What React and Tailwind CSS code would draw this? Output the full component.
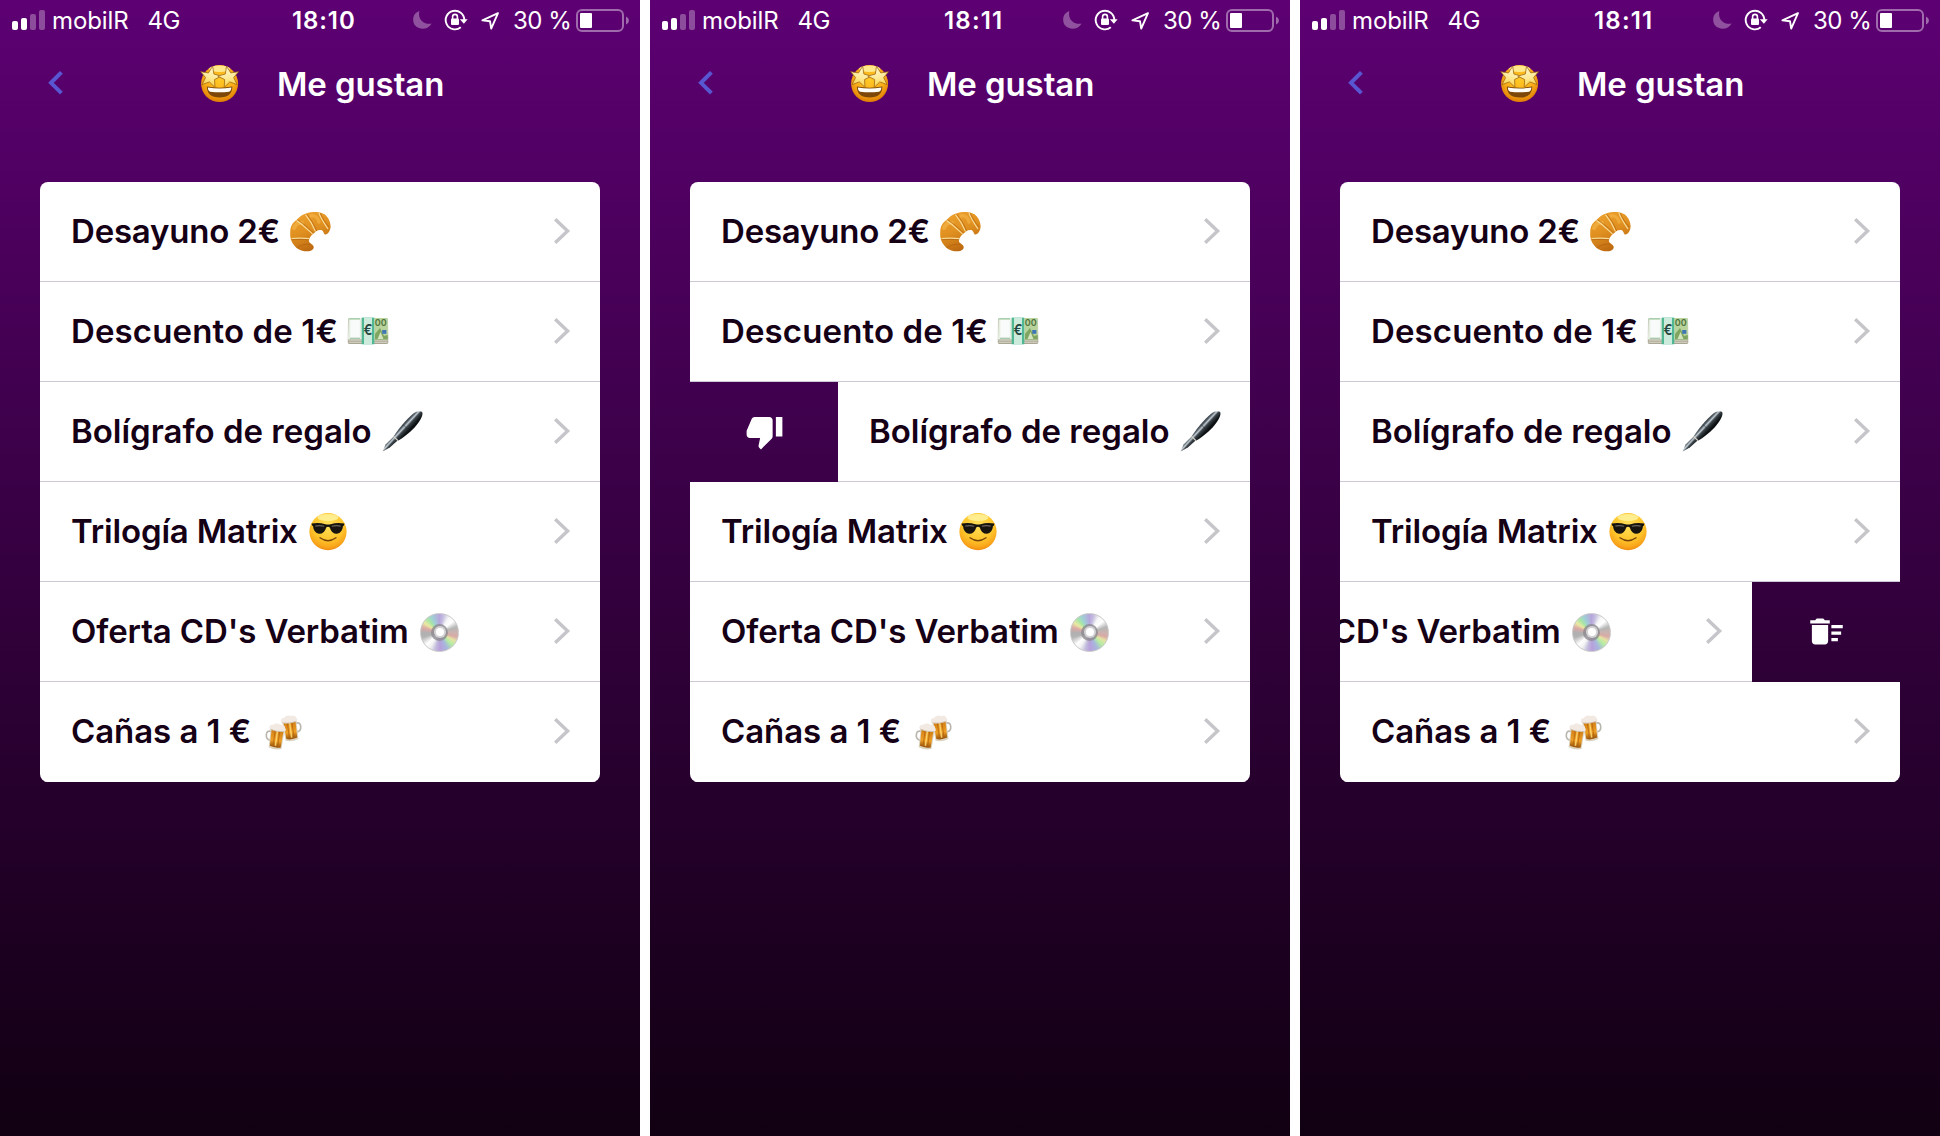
import React from "react";

const STAR =
  "M0 -11 L2.8 -3.6 L10.6 -3.2 L4.6 1.6 L6.6 9.2 L0 5 L-6.6 9.2 L-4.6 1.6 L-10.6 -3.2 L-2.8 -3.6 Z";

function StarStruck() {
  return (
    <svg className="size-11 shrink-0" viewBox="0 0 44 44">
      <defs>
        <radialGradient id="face-gold" cx="0.5" cy="0.4" r="0.6">
          <stop offset="0" stopColor="#ffc926" />
          <stop offset="0.65" stopColor="#f9ac18" />
          <stop offset="1" stopColor="#de7c04" />
        </radialGradient>
        <linearGradient id="star-gold" x1="0" y1="0" x2="0" y2="1">
          <stop offset="0" stopColor="#fff6cf" />
          <stop offset="0.6" stopColor="#fde994" />
          <stop offset="1" stopColor="#f9cf45" />
        </linearGradient>
      </defs>
      <circle cx="21.6" cy="21.6" r="18.5" fill="url(#face-gold)" />
      <ellipse cx="21.6" cy="6.8" rx="10.5" ry="3.2" fill="#fff0a0" opacity="0.85" />
      <path d="M8.8 24.6 Q21.6 26.8 34.4 24.6 Q34.2 35.6 21.6 35.6 Q9 35.6 8.8 24.6 Z" fill="#7c4708" />
      <path d="M9.8 25.4 Q21.6 27.6 33.4 25.4 Q33 29.2 31 29.7 Q21.6 31 12.2 29.7 Q10.2 29.2 9.8 25.4 Z" fill="#fffdf5" />
      <g fill="url(#star-gold)" stroke="#9c6510" strokeWidth="0.7" strokeLinejoin="round">
        <path d={STAR} transform="translate(12.4 15) rotate(12)" />
        <path d={STAR} transform="translate(30.8 15) rotate(-12)" />
      </g>
    </svg>
  );
}

function Croissant() {
  return (
    <svg className="size-11 shrink-0" viewBox="0 0 44 44">
      <defs>
        <linearGradient id="crust" x1="0.2" y1="0" x2="0.6" y2="1">
          <stop offset="0" stopColor="#eea22f" />
          <stop offset="0.5" stopColor="#df8f1f" />
          <stop offset="1" stopColor="#b8640f" />
        </linearGradient>
      </defs>
      <path
        d="M42.6 16 C42.8 20 40 24.5 37.4 24.6 C35.5 24.6 36 20.5 33 20 C29 19.6 27.6 22 25.5 23.5 C22.5 26 20 29.5 21.2 32 C22.3 34 26 34.6 25.7 37.4 C25.3 40.6 20.5 41.6 16.5 41.2 C12 40.6 8.5 38.8 6.5 35.8 C3 32 1.8 27.5 2.2 22 C2.4 16 4.5 12.5 9 9.5 C13 5 18 2.6 25.3 2 C31 1.8 36.5 3.2 38.6 6.2 C41.3 9.2 42.4 12.5 42.6 16 Z"
        fill="url(#crust)"
      />
      <path d="M6 18 C8 14 11 12 14 13" stroke="#f5b84c" strokeWidth="4" fill="none" strokeLinecap="round" opacity="0.6" />
      <path d="M23 6 C27 5 30 8 31 12" stroke="#f5b64a" strokeWidth="3.4" fill="none" strokeLinecap="round" opacity="0.6" />
      <g stroke="#f7dc98" strokeWidth="1.1" fill="none">
        <path d="M8.5 10.5 C14 14 20 20 24.5 24" />
        <path d="M17.5 4.6 C21 9 25 15 27.5 21.5" />
        <path d="M31 3 C32.5 8 36 13 40 19" />
        <path d="M3.5 28.5 C9 28 15 28 21.6 28.6" />
      </g>
      <g stroke="#a9590c" strokeWidth="0.9" fill="none" opacity="0.6">
        <path d="M9.5 9.8 C15 13 21 18.5 25.5 23" />
        <path d="M18.7 4.2 C22 8 26 14 28.6 21" />
        <path d="M32.4 3.3 C34 8 37 12 41 17" />
        <path d="M3.8 29.8 C9 29.4 15 29.2 21.2 29.8" />
        <path d="M9 38 C12 35 17 34 22.4 34" />
      </g>
    </svg>
  );
}

function EuroNotes() {
  return (
    <svg className="size-11 shrink-0" viewBox="0 0 44 44">
      <path d="M2 9 H42 L42.3 32.5 Q42 34 40.5 34 H3.5 Q2 34 1.8 32.5 Z" fill="#a9a694" />
      <path d="M2.6 30.8 H41.5 M2.6 32.4 H41.5" stroke="#e5e3d4" strokeWidth="0.7" />
      <path d="M2.5 8 H41.5 L42 29.5 H2 Z" fill="#e6eee2" />
      <rect x="4.3" y="10" width="9.5" height="17" fill="#f8fbfa" />
      <path d="M2.5 8.8 H14" stroke="#9cc79f" strokeWidth="1.2" />
      <path d="M4 28.4 H14" stroke="#a6c8ad" strokeWidth="1.1" />
      <path d="M28.5 8 H41.5 L42 29.5 H28.5 Z" fill="#b9d39c" />
      <path d="M29 24 L34 18 L38 26 L41.8 25 V29.5 H29 Z" fill="#7fa561" />
      <path d="M31.5 29 L34.6 22 L37.4 29 Z" fill="#d3e4bf" />
      <rect x="36.2" y="20" width="4.2" height="3.8" fill="#3f76b5" />
      <text x="28.8" y="16.2" fontSize="9" fontFamily="Inter, sans-serif" fontWeight="600" fill="#50733d">00</text>
      <path d="M15.7 7.6 H28.3 V34.3 H15.7 Z" fill="#4fb893" />
      <path d="M18 7.6 H26 V34.3 H18 Z" fill="#cdebdc" />
      <text x="17.4" y="24.8" fontSize="15" fontFamily="Inter, sans-serif" fontWeight="600" fill="#25463f" textLength="9" lengthAdjust="spacingAndGlyphs">€</text>
    </svg>
  );
}

function Pen() {
  return (
    <svg className="size-11 shrink-0" viewBox="0 0 44 44">
      <defs>
        <linearGradient id="barrel" gradientUnits="userSpaceOnUse" x1="18.5" y1="16.5" x2="25.5" y2="23">
          <stop offset="0" stopColor="#22282c" />
          <stop offset="0.25" stopColor="#56616a" />
          <stop offset="0.42" stopColor="#c3ccd2" />
          <stop offset="0.6" stopColor="#3c454b" />
          <stop offset="1" stopColor="#0d1113" />
        </linearGradient>
      </defs>
      <path d="M1.6 41.6 L4.6 34.6 L13.2 26 L17.2 30 L8.8 37.4 Z" fill="url(#barrel)" />
      <path d="M12.3 27 C16.5 20 25 9.8 32.4 3.6 C35.8 1 40.2 0.4 41.4 2.6 C42.2 6.4 38 12.6 33.6 17.4 C27.8 23.4 22 27.8 16.6 31 Z" fill="url(#barrel)" />
      <path d="M12.4 26.2 L17.2 30.9" stroke="#d8d2c6" strokeWidth="1.2" />
      <path d="M22 14.5 L28.5 21" stroke="#20262a" strokeWidth="0.7" opacity="0.7" />
      <path d="M2.3 41 L7 35.8" stroke="#9fa8ad" strokeWidth="0.8" />
    </svg>
  );
}

function Sunglasses() {
  return (
    <svg className="size-11 shrink-0" viewBox="0 0 44 44">
      <defs>
        <radialGradient id="face-sun" cx="0.5" cy="0.32" r="0.7">
          <stop offset="0" stopColor="#ffe15a" />
          <stop offset="0.6" stopColor="#fec42a" />
          <stop offset="0.85" stopColor="#f9a51b" />
          <stop offset="1" stopColor="#ee850f" />
        </radialGradient>
      </defs>
      <circle cx="21" cy="21.6" r="18.6" fill="url(#face-sun)" />
      <ellipse cx="21" cy="7.5" rx="10.5" ry="3.6" fill="#fff6a8" opacity="0.75" />
      <path d="M4.6 13.6 Q12 12.4 18.4 14.2 Q21 14.8 23.6 14.2 Q30 12.4 37.4 13.6 L37 15.4 L36 16 Q35.4 22.8 30 23.8 Q24.6 24 22.8 17.4 Q21 16.2 19.2 17.4 Q17.4 24 12 23.8 Q6.6 22.8 6 16 L5 15.4 Z" fill="#17130f" />
      <path d="M8.3 16.1 Q12.5 15 17.2 16.3 M24.8 16.3 Q29.5 15 33.7 16.1" stroke="#6a655f" strokeWidth="1.1" fill="none" />
      <path d="M13 27.8 Q21 33.6 29 27.8" stroke="#75420a" strokeWidth="1.4" fill="none" strokeLinecap="round" />
    </svg>
  );
}

function Disc() {
  return (
    <span className="flex size-11 shrink-0 items-center justify-center">
      <span className="flex size-[39px] items-center justify-center rounded-full border border-[#c9c9c9] bg-[conic-gradient(#b7a6dc_0deg,#c6bfe0_14deg,#f7f7f7_32deg,#ffffff_50deg,#b5b5b5_72deg,#cdb2ae_92deg,#d9a9a6_104deg,#e4e3a4_118deg,#b5eda2_134deg,#a7b8dc_154deg,#b79fdc_178deg,#c2bcdc_194deg,#f3f3f3_212deg,#ffffff_228deg,#b3b3b3_254deg,#b0b0b0_268deg,#dba9a6_286deg,#e9eaa2_302deg,#a8e6a4_318deg,#9fd0d6_334deg,#b7a6dc_360deg)]">
        <span className="flex size-[17px] items-center justify-center rounded-full bg-[#8d8a90]/80">
          <span className="flex size-[12px] items-center justify-center rounded-full bg-[#d3d3d6]">
            <span className="size-[8px] rounded-full bg-white" />
          </span>
        </span>
      </span>
    </span>
  );
}

function Mug({ transform, flip }) {
  return (
    <g transform={transform}>
      <path
        d={flip ? "M13.5 8.5 Q18 7.4 18 12 Q18 17 13 17.4" : "M1.5 8.5 Q-3 7.4 -3 12 Q-3 17 2 17.4"}
        fill="none"
        stroke="#b9b6ae"
        strokeWidth="1.6"
      />
      <path d="M0.5 4 H14.5 L14 24.4 Q7.5 26.6 1 24.4 Z" fill="#dcd3bd" />
      <path d="M1.5 6 H13.5 L13 22.8 Q7.5 24.6 2 22.8 Z" fill="url(#beer)" />
      <path d="M5.2 7 V22 M9.8 7 V22" stroke="#a85a08" strokeWidth="1" opacity="0.6" />
      <path d="M7.5 7 V22" stroke="#ffdf7a" strokeWidth="1.5" opacity="0.8" />
      <path d="M-0.6 6 C-2 2.5 1 1.2 2.6 1.6 C4 -0.8 8 -1 9.6 0.6 C12 -0.4 14.8 1.4 14.6 3 C16.4 4.4 15.6 6.8 14 6.8 Q7 8.6 -0.6 6 Z" fill="#f1e9e2" />
      <path d="M0 6.2 Q7 8.4 14.4 6.6" stroke="#cdbfae" strokeWidth="0.8" fill="none" />
    </g>
  );
}

function Beers() {
  return (
    <svg className="size-11 shrink-0" viewBox="0 0 44 44">
      <defs>
        <linearGradient id="beer" x1="0" y1="0" x2="0" y2="1">
          <stop offset="0" stopColor="#cf7d16" />
          <stop offset="0.6" stopColor="#ef9f24" />
          <stop offset="1" stopColor="#95500b" />
        </linearGradient>
      </defs>
      <Mug transform="translate(18.2 6.8) rotate(-8)" flip />
      <Mug transform="translate(8 13) rotate(8)" />
    </svg>
  );
}

function Chevron() {
  return (
    <svg className="h-[30px] w-5 shrink-0" viewBox="0 0 20 30" fill="none" stroke="#c5c5ca" strokeWidth="3.4">
      <path d="M3.2 3.2 L15.6 15 L3.2 26.8" />
    </svg>
  );
}

function Signal() {
  return (
    <svg className="h-5 w-[33px]" viewBox="0 0 33 20" fill="#fff">
      <rect x="0" y="11" width="6" height="9" rx="2" />
      <rect x="9" y="8" width="6" height="12" rx="2" />
      <rect x="18" y="4" width="6" height="16" rx="2" opacity="0.3" />
      <rect x="27" y="0" width="6" height="20" rx="2" opacity="0.3" />
    </svg>
  );
}

function StatusBar({ time }) {
  return (
    <div className="flex h-10 items-center pl-3 text-2xl leading-10 whitespace-nowrap">
      <div className="flex w-[280px] items-center">
        <Signal />
        <span className="ml-[7px] pt-0.5 tracking-[-0.1px]">mobilR</span>
        <span className="ml-[19px] pt-0.5 tracking-[-0.6px]">4G</span>
      </div>
      <span
        className={`w-[120px] pt-0.5 font-semibold ${
          time === "18:10" ? "tracking-[0.9px]" : "pl-0.5 tracking-[1.2px]"
        }`}
      >
        {time}
      </span>
      <svg className="h-6 w-5" viewBox="0 0 20 24" fill="#fff" opacity="0.32">
        <path d="M7.4 3 C-0.2 5.6 0.2 14.2 3.2 17.6 C7.6 22.4 16.4 21.8 19.6 15.4 C13.8 17.2 5.2 12.6 7.4 3 Z" />
      </svg>
      <svg className="ml-3 h-6 w-6" viewBox="0 0 24 24" fill="none">
        <path d="M20.3 12 A9.3 9.3 0 1 0 16.8 19.3" stroke="#fff" strokeWidth="1.9" />
        <path d="M15.8 11.2 H23.6 L19.9 15.8 Z" fill="#fff" />
        <rect x="7" y="10.6" width="8" height="6.4" rx="1" fill="#fff" />
        <path d="M8.6 11 V8.8 A2.4 2.4 0 0 1 13.4 8.8 V11" stroke="#fff" strokeWidth="1.6" />
      </svg>
      <svg className="ml-3 h-6 w-5" viewBox="0 0 20 24" fill="none" stroke="#fff" strokeWidth="1.9" strokeLinejoin="round">
        <path d="M18 5.2 L2.4 12.4 L10 13.2 L11.2 20.6 Z" />
      </svg>
      <span className="ml-[13px] w-[62px] pt-0.5 tracking-[-0.5px]">30 %</span>
      <svg className="h-6 w-14" viewBox="0 0 56 24">
        <rect x="2" y="2" width="46" height="21" rx="5" fill="none" stroke="#fff" strokeOpacity="0.42" strokeWidth="2" />
        <rect x="5" y="5" width="12" height="15" rx="1" fill="#fff" />
        <path d="M51 8.5 Q54 10 54 12.5 Q54 15 51 16.5 Z" fill="#fff" opacity="0.42" />
      </svg>
    </div>
  );
}

const ITEMS = [
  { id: "desayuno", label: "Desayuno 2€", Emoji: Croissant, text: "tracking-[-0.2px] mr-2" },
  { id: "descuento", label: "Descuento de 1€", Emoji: EuroNotes, text: "tracking-[0.12px] mr-2" },
  { id: "boligrafo", label: "Bolígrafo de regalo", Emoji: Pen, text: "mr-[9px]" },
  { id: "matrix", label: "Trilogía Matrix", Emoji: Sunglasses, text: "tracking-[-0.16px] mr-[9px]" },
  { id: "cds", label: "Oferta CD's Verbatim", Emoji: Disc, text: "tracking-[-0.12px] mr-[9px]" },
  { id: "canas", label: "Cañas a 1 €", Emoji: Beers, text: "tracking-[-0.07px] mr-[12px]" },
];

function Row({ item, swipe, last }) {
  const { label, Emoji, text } = item;
  return (
    <li className="flex h-[100px] overflow-hidden">
      {swipe === "right" && (
        <button className="flex w-[148px] shrink-0 items-center justify-center pb-[2px]" aria-label="No me gusta">
          <svg className="size-[39px]" viewBox="0 0 24 24" fill="#fff">
            <path d="M15 3H6c-.83 0-1.54.5-1.84 1.22l-3.02 7.05c-.09.23-.14.47-.14.73v2c0 1.1.9 2 2 2h6.31l-.95 4.57-.03.32c0 .41.17.79.44 1.06L9.83 23l6.59-6.59c.36-.36.58-.86.58-1.41V5c0-1.1-.9-2-2-2zm4 0v12h4V3h-4z" />
          </svg>
        </button>
      )}
      <div
        className={`flex w-[560px] shrink-0 items-center border-b bg-white pt-px pr-7 pl-[31px] ${
          last ? "border-white" : "border-[#cec8d6]"
        } ${swipe === "left" ? "-ml-[148px]" : ""}`}
      >
        <span className={`pb-0.5 text-[33px] leading-10 font-semibold whitespace-nowrap text-[#150016] ${text}`}>{label}</span>
        <Emoji />
        <span className="ml-auto pb-0.5">
          <Chevron />
        </span>
      </div>
      {swipe === "left" && (
        <button className="flex w-[148px] shrink-0 items-center justify-center pb-[2px]" aria-label="Eliminar">
          <svg className="size-[39px]" viewBox="0 0 24 24" fill="#fff">
            <path d="M15 16h4v2h-4zm0-8h7v2h-7zm0 4h6v2h-6zM3 18c0 1.1.9 2 2 2h6c1.1 0 2-.9 2-2V8H3v10zM14 5h-3l-1-1H6L5 5H2v2h12z" />
          </svg>
        </button>
      )}
    </li>
  );
}

function Phone({ time, swiped, direction }) {
  return (
    <section className="h-full w-[640px] shrink-0 overflow-hidden bg-linear-to-b from-[#5d0073] to-[#110012] text-white">
      <StatusBar time={time} />
      <header className="flex h-[88px] items-center pl-[46px]">
        <svg className="h-7 w-[18px]" viewBox="0 0 18 28" fill="none" stroke="#5856d0" strokeWidth="4">
          <path d="M15.4 2.4 L5 12.8 L15.4 23.2" />
        </svg>
        <span className="ml-[134px]">
          <StarStruck />
        </span>
        <h1 className="ml-[35px] text-[33px] leading-10 font-semibold tracking-[-0.1px]">Me gustan</h1>
      </header>
      <ul className="mx-10 mt-[54px] overflow-hidden rounded-lg">
        {ITEMS.map((item, i) => (
          <Row key={item.id} item={item} swipe={item.id === swiped ? direction : null} last={i === ITEMS.length - 1} />
        ))}
      </ul>
    </section>
  );
}

export default function App() {
  return (
    <main className="flex h-[1136px] w-[1940px] gap-2.5 overflow-hidden bg-white font-['Inter',sans-serif]">
      <Phone time="18:10" />
      <Phone time="18:11" swiped="boligrafo" direction="right" />
      <Phone time="18:11" swiped="cds" direction="left" />
    </main>
  );
}
